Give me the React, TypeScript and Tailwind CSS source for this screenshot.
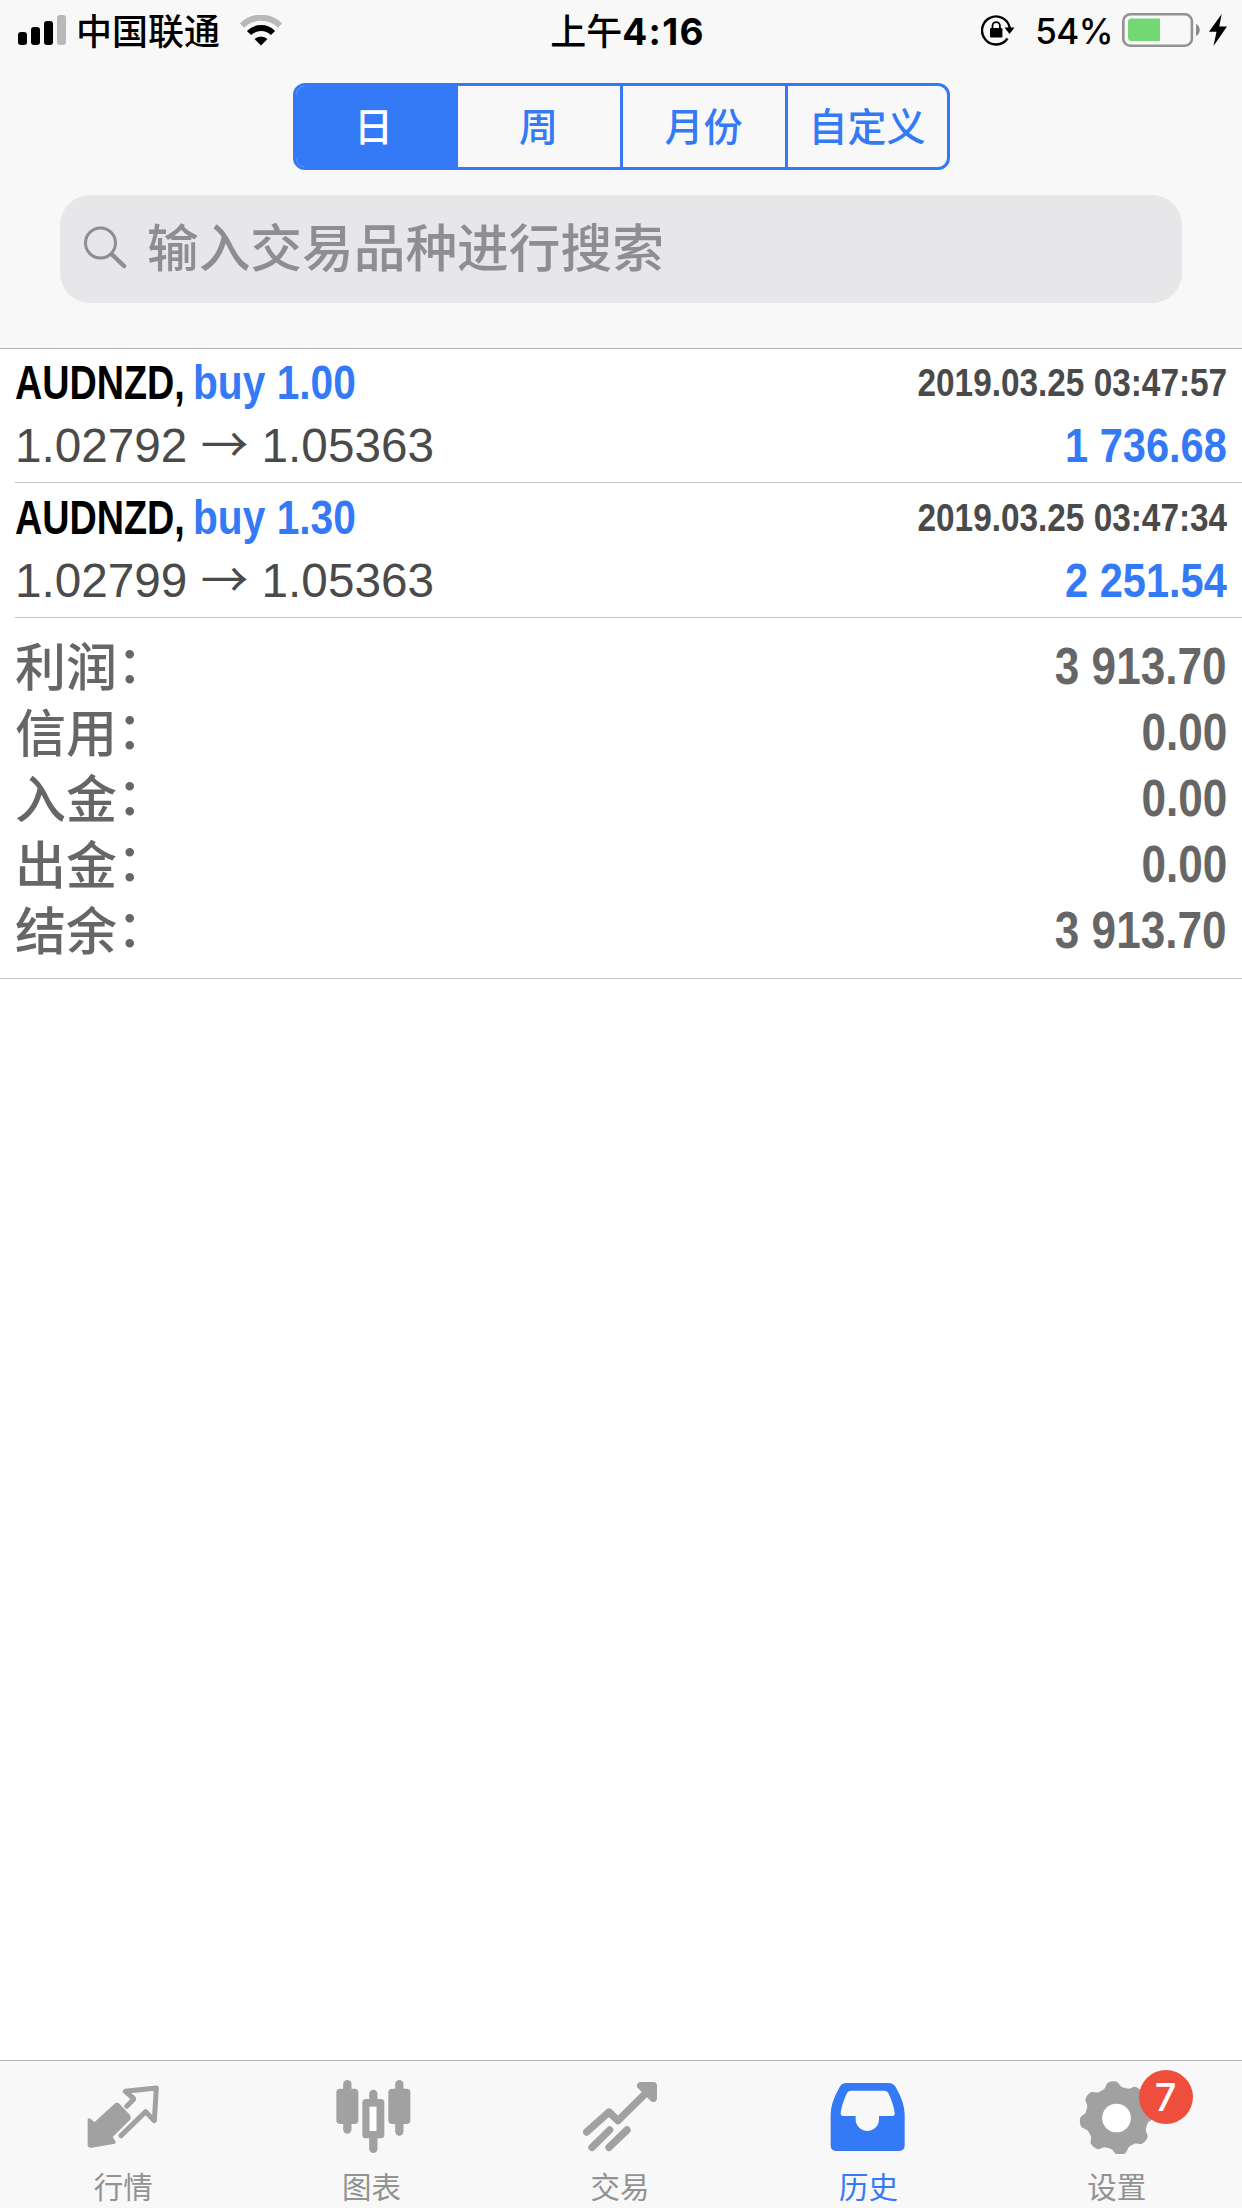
import type { ReactNode } from "react";

const deals = [
  {
    symbol: "AUDNZD",
    side: "buy 1.00",
    open: "1.02792",
    close: "1.05363",
    time: "2019.03.25 03:47:57",
    profit: "1 736.68",
  },
  {
    symbol: "AUDNZD",
    side: "buy 1.30",
    open: "1.02799",
    close: "1.05363",
    time: "2019.03.25 03:47:34",
    profit: "2 251.54",
  },
];

const totals = [
  { label: "利润", value: "3 913.70" },
  { label: "信用", value: "0.00" },
  { label: "入金", value: "0.00" },
  { label: "出金", value: "0.00" },
  { label: "结余", value: "3 913.70" },
];

const SignalIcon = () => (
  <svg width="48" height="30" viewBox="0 0 48 30">
    <rect x="0" y="17" width="9" height="13" rx="3" />
    <rect x="13" y="12" width="9" height="18" rx="3" />
    <rect x="26" y="6" width="9" height="24" rx="3" />
    <rect x="39" y="0" width="9" height="30" rx="3" fill="#b9b9b9" />
  </svg>
);

const WifiIcon = () => (
  <svg width="42" height="31" viewBox="0 0 42 31" fill="none">
    <path d="M2 10.5a27 27 0 0 1 38 0" stroke="#b9b9b9" strokeWidth="6" />
    <path d="M9 18a17 17 0 0 1 24 0" stroke="#000" strokeWidth="6" />
    <path d="M14.5 24a9.5 9.5 0 0 1 13 0L21 30.5z" fill="#000" />
  </svg>
);

const RotationLockIcon = () => (
  <svg width="34" height="32" viewBox="0 0 34 32" fill="none">
    <path d="M26.5 24.5A14 14 0 1 1 28.8 14" stroke="#000" strokeWidth="2.4" />
    <path d="M23.5 13.5h10l-5 6.5z" fill="#000" />
    <rect x="9" y="14" width="12.4" height="9.5" rx="1.2" fill="#000" />
    <path d="M11.5 15v-3.2a3.7 3.7 0 0 1 7.4 0V15" stroke="#000" strokeWidth="1.8" />
  </svg>
);

const BatteryIcon = () => (
  <svg width="79" height="34" viewBox="0 0 79 34" fill="none">
    <rect x="1.3" y="1.3" width="68.6" height="31.4" rx="7" stroke="#929292" strokeWidth="2.6" />
    <path d="M6 9a3.5 3.5 0 0 1 3.500-3.500H38v22.500H9.500A3.500 3.500 0 0 1 6 24.500z" fill="#73d873" />
    <path d="M74 11c5 2 5 10 0 12z" fill="#8c8c8c" />
  </svg>
);

const BoltIcon = () => (
  <svg width="18" height="32" viewBox="0 0 18 32">
    <path d="M12.700 0L0 17.800h7.500L4.500 32 18 12.500h-7.700z" />
  </svg>
);

const SearchIcon = () => (
  <svg width="44" height="44" viewBox="0 0 44 44" fill="none" stroke="#8e8e91" strokeLinecap="round">
    <circle cx="16.500" cy="17" r="15" strokeWidth="3" />
    <path d="M28 28.500L40 40" strokeWidth="4.500" />
  </svg>
);

const QuotesIcon = () => (
  <svg width="84" height="80" viewBox="0 0 252 240" fill="none">
    <path
      d="M97 90q8-8 16 0l30 32q7 9 0 17L92 189l8 12q3 8-5 9l-66 11q-12 1-12-8v-77q2-5 8-2l13 10z"
      fill="#a1a1a1"
    />
    <path
      d="M134 97l20-20q2-3-1-5l-23-20 93-10-6 98-26-27-74 72"
      stroke="#a1a1a1"
      strokeWidth="15"
      strokeLinecap="round"
      strokeLinejoin="round"
    />
  </svg>
);

const ChartIcon = () => (
  <svg width="84" height="80" viewBox="0 0 252 240" fill="#a1a1a1">
    <rect x="16" y="44" width="66" height="106" rx="11" />
    <rect x="36.500" y="18" width="25" height="161" rx="12.500" />
    <rect x="94" y="75" width="66" height="118" rx="11" />
    <rect x="114.500" y="47" width="25" height="190" rx="12.500" />
    <rect x="172" y="44" width="66" height="106" rx="11" />
    <rect x="192.500" y="18" width="25" height="167" rx="12.500" />
    <rect x="115.500" y="98" width="21" height="73" fill="#fff" />
  </svg>
);

const TradeIcon = () => (
  <svg
    width="84"
    height="80"
    viewBox="0 0 252 240"
    fill="none"
    stroke="#a1a1a1"
    strokeWidth="22"
    strokeLinecap="round"
    strokeLinejoin="round"
  >
    <path d="M23 174l67-60 27 26L218 40" />
    <path d="M185 35h38v38z" fill="#a1a1a1" />
    <path d="M39 220l53-52M90 220l54-52" />
  </svg>
);

const HistoryIcon = () => (
  <svg width="84" height="80" viewBox="0 0 252 240">
    <path
      fillRule="evenodd"
      d="M58 27h126q15 0 22 12 27 47 27 82v93q0 17-17 17H28q-17 0-17-17v-93q0-35 27-82 6-12 20-12zM73 50q-10 0-14 9-14 30-18 57-1 10 9 10h36v10a35 35 0 0 0 70 0v-10h39q9 0 8-10-4-27-18-57-4-9-14-9z"
      fill="#347af6"
    />
  </svg>
);

// eight soft, flat-topped teeth around a round hub
const gearPath =
  Array.from({ length: 180 }, (_, i) => {
    const a = (i * 2 * Math.PI) / 180;
    const r = 102 + 9 * Math.tanh(1.8 * Math.cos(8 * (a - 1.45)));
    return `${i ? "L" : "M"}${(121.6 + r * Math.cos(a)).toFixed(1)} ${(132 + r * Math.sin(a)).toFixed(1)}`;
  }).join("") + "z";

const SettingsIcon = () => (
  <svg width="84" height="80" viewBox="0 0 252 240">
    <path d={gearPath} fill="#a1a1a1" />
    <circle cx="121.600" cy="132" r="43" fill="#fff" />
  </svg>
);

const StatusBar = () => (
  <div className="grid h-[60px] grid-cols-[1fr_auto_1fr] items-center pl-[18px] pr-[15px] text-[36px] leading-none">
    <div className="flex items-center">
      <SignalIcon />
      <span className="ml-[10px] mr-[20px] mt-[4px] font-medium">中国联通</span>
      <WifiIcon />
    </div>
    <span className="ml-[10px] mt-[3px] font-medium">
      上午<span className="text-[37px] font-bold tracking-[1.3px]">4:16</span>
    </span>
    <div className="flex items-center justify-end">
      <RotationLockIcon />
      <span className="ml-[20px] mr-[9px] mt-[3px] text-[35px] font-medium tracking-[-0.5px]">54%</span>
      <BatteryIcon />
      <span className="ml-[8px]">
        <BoltIcon />
      </span>
    </div>
  </div>
);

const periods = ["日", "周", "月份", "自定义"];

const PeriodTabs = () => (
  <div className="mx-auto mt-[23px] grid h-[87px] w-[657px] grid-cols-[162px_162px_165px_162px] overflow-hidden rounded-[12px] border-3 border-[#347af6] text-[39px] font-medium leading-none text-[#347af6]">
    {periods.map((p, i) => (
      <button
        key={p}
        className={
          i === 0
            ? "bg-[#347af6] pr-1.5 text-white"
            : i === 1
              ? ""
              : "border-l-3 border-[#347af6]"
        }
      >
        {p}
      </button>
    ))}
  </div>
);

const Deal = ({ deal }: { deal: (typeof deals)[number] }) => (
  <li className="ml-[15px] h-[135px] border-b border-[#c4c4c6] pr-[15px] pt-[3px] font-['Liberation_Sans',sans-serif]">
    <div className="flex h-[63px] items-center justify-between whitespace-nowrap font-bold">
      <div className="flex text-[48px] leading-none">
        <span className="w-[178px] origin-left scale-x-[0.786]">{deal.symbol},</span>
        <span className="origin-left scale-x-[0.848] text-[#347af6]">{deal.side}</span>
      </div>
      <span className="origin-right scale-x-[0.855] text-[39px] leading-none text-[#4a4a4a]">{deal.time}</span>
    </div>
    <div className="flex h-[63px] items-center justify-between text-[48px] leading-none">
      <span className="mb-[3px] text-[47.7px] text-[#4a4a4a]">
        {deal.open} <span className="font-['Noto_Sans_CJK_SC'] leading-none">→</span> {deal.close}
      </span>
      <span className="origin-right scale-x-[0.866] font-bold text-[#347af6]">{deal.profit}</span>
    </div>
  </li>
);

const Totals = () => (
  <dl className="border-b border-[#c4c4c6] px-[15px] pb-[14px] pt-[16px] text-[51px] leading-none text-[#666]">
    {totals.map((t) => (
      <div key={t.label} className="flex h-[66px] items-center justify-between">
        <dt className="font-medium">
          {t.label}
          <span className="relative -top-[3px]">：</span>
        </dt>
        <dd className="mb-[2px] origin-right scale-x-[0.865] font-['Liberation_Sans',sans-serif] font-bold">
          {t.value}
        </dd>
      </div>
    ))}
  </dl>
);

type TabProps = { label: string; icon: ReactNode; active?: boolean; badge?: string };

const Tab = ({ label, icon, active, badge }: TabProps) => (
  <button
    className={`relative flex flex-1 flex-col items-center pt-[13px] text-[30px] leading-none ${
      active ? "text-[#347af6]" : "text-[#929292]"
    }`}
  >
    {icon}
    <span className="mr-[2px] mt-[19px] text-[29.5px]">{label}</span>
    {badge && (
      <span className="absolute left-[145px] top-[9px] flex size-[54px] items-center justify-center rounded-full bg-[#ee4e3b] text-[38px] font-medium text-white">
        {badge}
      </span>
    )}
  </button>
);

export default function App() {
  return (
    <div className="flex h-[2208px] w-[1242px] flex-col bg-white font-['Inter','Noto_Sans_CJK_SC',sans-serif] text-black">
      <header className="h-[349px] border-b border-[#b2b2b2] bg-[#f8f8f8]">
        <StatusBar />
        <PeriodTabs />
        <div className="mx-[60px] mt-[25px] flex h-[108px] items-center rounded-[30px] bg-[#e7e7e9] pl-[24px]">
          <span className="mb-[3px]">
            <SearchIcon />
          </span>
          <span className="mb-px ml-[19px] text-[51.700px] font-medium leading-none text-[#8e8e91]">
            输入交易品种进行搜索
          </span>
        </div>
      </header>
      <main className="-mt-px flex-1">
        <ul>
          {deals.map((d) => (
            <Deal key={d.time} deal={d} />
          ))}
        </ul>
        <Totals />
      </main>
      <nav className="flex h-[148px] border-t border-[#b2b2b2] bg-[#f8f8f8]">
        <Tab label="行情" icon={<QuotesIcon />} />
        <Tab label="图表" icon={<ChartIcon />} />
        <Tab label="交易" icon={<TradeIcon />} />
        <Tab label="历史" icon={<HistoryIcon />} active />
        <Tab label="设置" icon={<SettingsIcon />} badge="7" />
      </nav>
    </div>
  );
}
